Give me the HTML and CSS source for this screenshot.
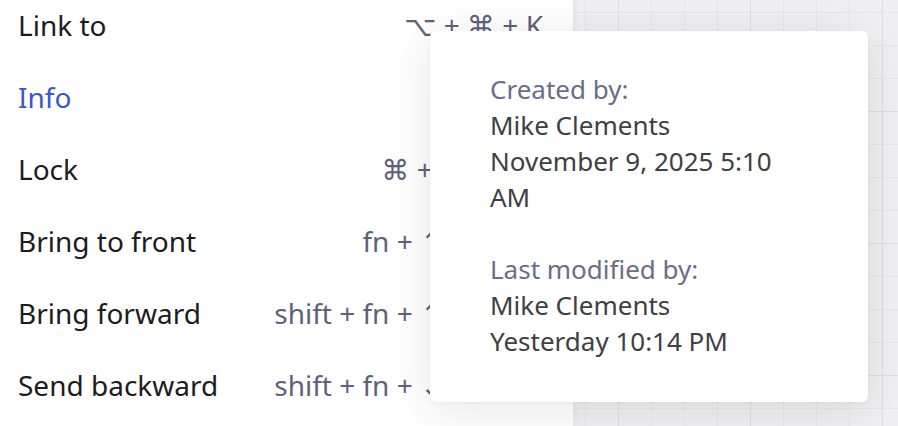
FILE: index.html
```html
<!DOCTYPE html>
<html lang="en">
<head>
<meta charset="utf-8">
<title>Context menu with info</title>
<link rel="stylesheet" href="styles.css">
</head>
<body>
<div class="app">
  <div class="menu">
    <div class="row"><span class="label">Link to</span><span class="keys">⌥ + ⌘ + K</span></div>
    <div class="row"><span class="label label-active">Info</span><span class="keys"></span></div>
    <div class="row"><span class="label">Lock</span><span class="keys">⌘ + shift + L</span></div>
    <div class="row"><span class="label">Bring to front</span><span class="keys">fn + <span class="key-wide">↑</span></span></div>
    <div class="row"><span class="label">Bring forward</span><span class="keys">shift + fn + <span class="key-wide">↑</span></span></div>
    <div class="row"><span class="label">Send backward</span><span class="keys">shift + fn + <span class="key-wide">↓</span></span></div>
  </div>
  <div class="canvas"></div>
  <div class="info-card">
    <div class="group">
      <div class="info-label">Created by:</div>
      <div class="info-value">Mike Clements</div>
      <div class="info-value">November 9, 2025 5:10 AM</div>
    </div>
    <div class="group">
      <div class="info-label">Last modified by:</div>
      <div class="info-value">Mike Clements</div>
      <div class="info-value">Yesterday 10:14 PM</div>
    </div>
  </div>
</div>
</body>
</html>
```
FILE: styles.css
```css
html, body {
  margin: 0;
  padding: 0;
}
body {
  width: 898px;
  height: 426px;
  overflow: hidden;
  font-family: "Noto Sans", "DejaVu Sans", sans-serif;
  background: #f2f2f4;
}
.app {
  position: relative;
  display: flex;
  width: 898px;
  height: 426px;
  overflow: hidden;
}
.menu {
  width: 573px;
  flex: none;
  background: #ffffff;
  margin-top: -11px;
  box-shadow: 2px 0 6px rgba(0, 0, 0, 0.04);
  position: relative;
  z-index: 1;
}
.row {
  height: 72px;
  display: flex;
  align-items: center;
  justify-content: space-between;
  padding: 0 30px 0 18px;
  font-size: 28px;
}
.label {
  color: #1c1c1e;
}
.label-active {
  color: #3a57d0;
}
.keys {
  color: #5e627a;
  white-space: nowrap;
}
.key-wide {
  display: inline-block;
  min-width: 123px;
}
.canvas {
  flex: 1;
  background-color: #f0f0f2;
  background-image:
    linear-gradient(to right, #dedee3 1px, transparent 1px),
    linear-gradient(to bottom, #dedee3 1px, transparent 1px),
    linear-gradient(to right, #e6e6ea 1px, transparent 1px),
    linear-gradient(to bottom, #e6e6ea 1px, transparent 1px);
  background-size: 132px 132px, 132px 132px, 33px 33px, 33px 33px;
  background-position: 45px 0, 0 111px, 12px 0, 0 12px;
}
.info-card {
  position: absolute;
  left: 430px;
  top: 31px;
  width: 438px;
  height: 371px;
  box-sizing: border-box;
  padding: 40px 80px 0 60px;
  background: #ffffff;
  border-radius: 6px;
  box-shadow: 0 8px 48px rgba(20, 20, 40, 0.10), 0 1px 4px rgba(20, 20, 40, 0.04);
  z-index: 2;
  display: flex;
  flex-direction: column;
  gap: 36px;
  font-size: 26px;
  line-height: 36px;
}
.info-label {
  color: #6a6e86;
}
.info-value {
  color: #404042;
}
```
